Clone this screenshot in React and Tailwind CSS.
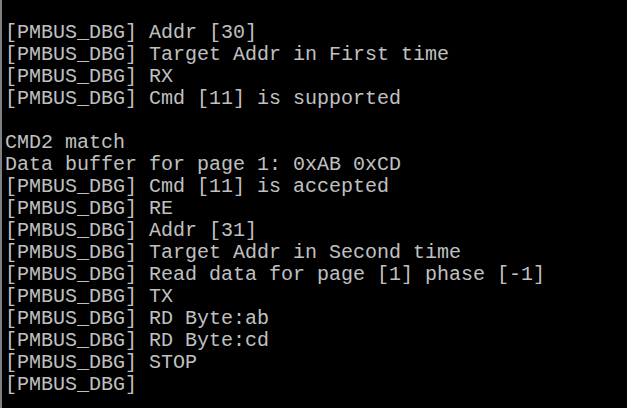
export default function App() {
  const lines = [
    "[PMBUS_DBG] Addr [30]",
    "[PMBUS_DBG] Target Addr in First time",
    "[PMBUS_DBG] RX",
    "[PMBUS_DBG] Cmd [11] is supported",
    "",
    "CMD2 match",
    "Data buffer for page 1: 0xAB 0xCD",
    "[PMBUS_DBG] Cmd [11] is accepted",
    "[PMBUS_DBG] RE",
    "[PMBUS_DBG] Addr [31]",
    "[PMBUS_DBG] Target Addr in Second time",
    "[PMBUS_DBG] Read data for page [1] phase [-1]",
    "[PMBUS_DBG] TX",
    "[PMBUS_DBG] RD Byte:ab",
    "[PMBUS_DBG] RD Byte:cd",
    "[PMBUS_DBG] STOP",
    "[PMBUS_DBG]",
  ];
  return (
    <div className="w-[627px] h-[408px] bg-black border-l-2 border-[#808080] pl-[3px] pt-[22px] overflow-hidden">
      <div className="font-['Courier_New','Nimbus_Mono_PS','FreeMono','Liberation_Mono',monospace] text-[20px] leading-[22px] text-[#c0c0c0] whitespace-pre">
        {lines.map((l, i) => (
          <div key={i} className="h-[22px]">{l}</div>
        ))}
      </div>
    </div>
  );
}
